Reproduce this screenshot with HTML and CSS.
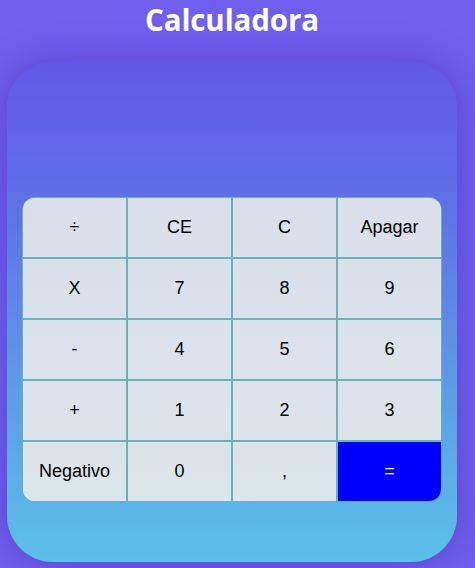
FILE: index.html
```html
<!DOCTYPE html>
<html lang="pt">
<head>
<meta charset="utf-8">
<title>Calculadora</title>
<link rel="stylesheet" href="styles.css">
</head>
<body>
<main class="app">
  <h1 class="title">Calculadora</h1>
  <section class="card">
    <div class="display"></div>
    <div class="keys">
      <button class="key">÷</button>
      <button class="key">CE</button>
      <button class="key">C</button>
      <button class="key">Apagar</button>
      <button class="key">X</button>
      <button class="key">7</button>
      <button class="key">8</button>
      <button class="key">9</button>
      <button class="key">-</button>
      <button class="key">4</button>
      <button class="key">5</button>
      <button class="key">6</button>
      <button class="key">+</button>
      <button class="key">1</button>
      <button class="key">2</button>
      <button class="key">3</button>
      <button class="key">Negativo</button>
      <button class="key">0</button>
      <button class="key">,</button>
      <button class="key key-equal">=</button>
    </div>
  </section>
</main>
</body>
</html>
```
FILE: styles.css
```css
html, body {
  margin: 0;
  padding: 0;
}
body {
  background: #6f5fef;
  height: 568px;
  overflow: hidden;
  font-family: "Liberation Sans", Arial, sans-serif;
}
.app {
  width: 450px;
  margin-left: 7px;
}
.title {
  margin: 0;
  height: 62px;
  text-align: center;
  color: #ffffff;
  font-family: "Open Sans", "Noto Sans", sans-serif;
  font-weight: 700;
  font-size: 29.5px;
  line-height: 40px;
  letter-spacing: -0.1px;
}
.card {
  height: 500px;
  box-sizing: border-box;
  border-radius: 46px;
  padding: 0 15px 60px;
  background: linear-gradient(to bottom, #6257e8 0%, #5f72e6 30%, #5d9be6 65%, #5bc0e8 100%);
  box-shadow: 0 0 30px 4px rgba(80, 55, 190, 0.55);
  display: flex;
  flex-direction: column;
  justify-content: flex-end;
}
.keys {
  display: grid;
  grid-template-columns: repeat(4, 103px);
  grid-template-rows: repeat(5, 59px);
  gap: 2px;
  border: 1px solid #66b4b8;
  background: #66b4b8;
  border-radius: 13px;
  overflow: hidden;
}
.key {
  border: 0;
  margin: 0;
  padding: 0;
  font-family: "Liberation Sans", Arial, sans-serif;
  font-size: 18px;
  color: #000000;
  background-image: linear-gradient(to bottom, #dadfea 197px, #dce5ea 502px);
  background-attachment: fixed;
}
.key-equal {
  background: #0000ff;
  color: #ffffff;
}
```
